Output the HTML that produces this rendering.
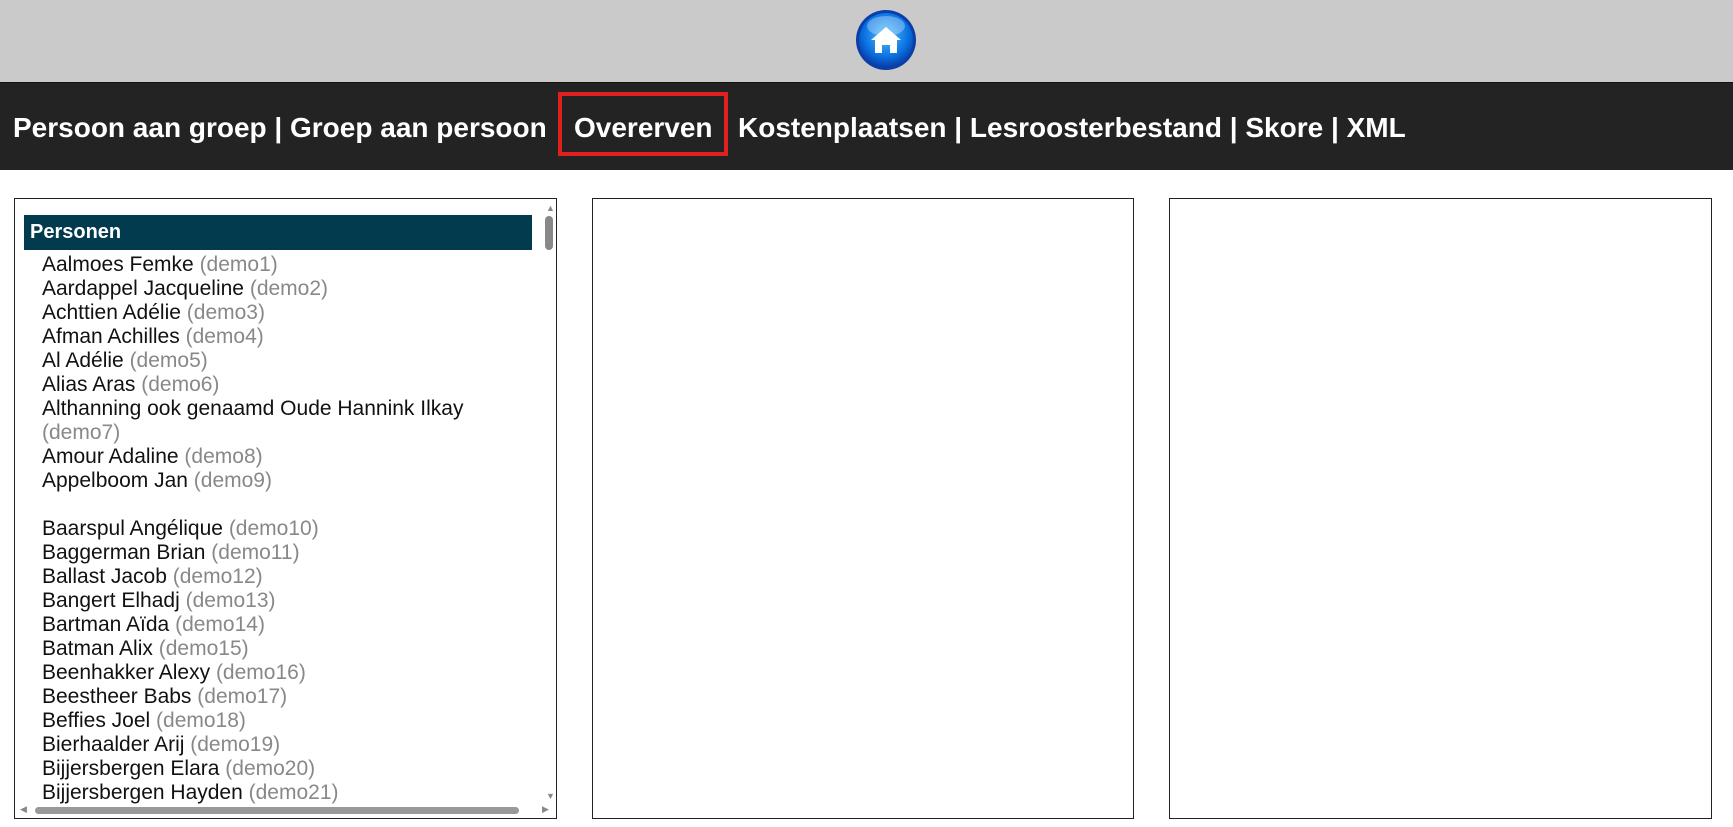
<!DOCTYPE html>
<html><head><meta charset="utf-8"><style>
body{margin:0;width:1733px;height:827px;background:#fff;font-family:"Liberation Sans",Arial,sans-serif;overflow:hidden;position:relative}
.top{position:absolute;left:0;top:0;width:1733px;height:82px;background:#cbcacb;border-bottom:1px solid #111}
.nav{position:absolute;left:0;top:83px;width:1733px;height:87px;background:#232323;color:#fff;font-weight:bold;font-size:28px}
.nav span{position:absolute;top:29px;white-space:nowrap}
.red{position:absolute;left:558px;top:9px;width:170px;height:64px;border:4px solid #e0201f;box-sizing:border-box}
.panel{position:absolute;top:198px;height:621px;border:1px solid #222;box-sizing:border-box;background:#fff}
.hd{position:absolute;left:9px;top:16px;width:508px;height:35px;background:#033b4e;color:#fff;font-weight:bold;font-size:20px;line-height:35px;padding-left:6px;box-sizing:border-box}
.list{position:absolute;left:27px;top:54px;font-size:21px;line-height:24px;color:#111;width:480px}
.list i{font-style:normal;color:#888}
.vs{position:absolute;left:530px;top:17px;width:8px;height:34px;background:#888;border-radius:4px}
.hs{position:absolute;left:20px;top:608px;width:484px;height:7px;background:#999;border-radius:4px}
</style></head><body>
<div class="top">
<svg style="position:absolute;left:855px;top:9px" width="62" height="62" viewBox="0 0 62 62">
<defs><radialGradient id="g" cx="50%" cy="40%" r="60%"><stop offset="0" stop-color="#4fc3ff"/><stop offset="0.7" stop-color="#0a6fe0"/><stop offset="1" stop-color="#0a3ea8"/></radialGradient></defs>
<circle cx="31" cy="31" r="30" fill="#0a3ea8"/><circle cx="31" cy="31" r="27" fill="url(#g)"/>
<ellipse cx="31" cy="17" rx="19" ry="10" fill="#fff" opacity="0.3"/>
<path d="M16 31 L31 18 L46 31 L42 31 L42 44 L35 44 L35 36 L27 36 L27 44 L20 44 L20 31 Z" fill="#fff"/>
</svg></div>
<div class="nav">
<span style="left:13px">Persoon aan groep | Groep aan persoon</span>
<div class="red"></div>
<span style="left:574px">Overerven</span>
<span style="left:738px">Kostenplaatsen | Lesroosterbestand | Skore | XML</span>
</div>
<div class="panel" style="left:14px;width:543px">
<div class="hd">Personen</div>
<div class="vs"></div>
<div style="position:absolute;left:531px;top:4px;color:#888;font-size:9px">▲</div>
<div style="position:absolute;left:531px;top:592px;color:#888;font-size:9px">▼</div>
<div style="position:absolute;left:5px;top:605px;color:#888;font-size:9px">◀</div>
<div style="position:absolute;left:527px;top:605px;color:#888;font-size:9px">▶</div>
<div class="hs"></div>
<div class="list">
Aalmoes Femke <i>(demo1)</i><br>Aardappel Jacqueline <i>(demo2)</i><br>Achttien Adélie <i>(demo3)</i><br>Afman Achilles <i>(demo4)</i><br>Al Adélie <i>(demo5)</i><br>Alias Aras <i>(demo6)</i><br>Althanning ook genaamd Oude Hannink Ilkay<br><i>(demo7)</i><br>Amour Adaline <i>(demo8)</i><br>Appelboom Jan <i>(demo9)</i><br><br>Baarspul Angélique <i>(demo10)</i><br>Baggerman Brian <i>(demo11)</i><br>Ballast Jacob <i>(demo12)</i><br>Bangert Elhadj <i>(demo13)</i><br>Bartman Aïda <i>(demo14)</i><br>Batman Alix <i>(demo15)</i><br>Beenhakker Alexy <i>(demo16)</i><br>Beestheer Babs <i>(demo17)</i><br>Beffies Joel <i>(demo18)</i><br>Bierhaalder Arij <i>(demo19)</i><br>Bijjersbergen Elara <i>(demo20)</i><br>Bijjersbergen Hayden <i>(demo21)</i>
</div></div>
<div class="panel" style="left:592px;width:542px"></div>
<div class="panel" style="left:1169px;width:543px"></div>
</body></html>
